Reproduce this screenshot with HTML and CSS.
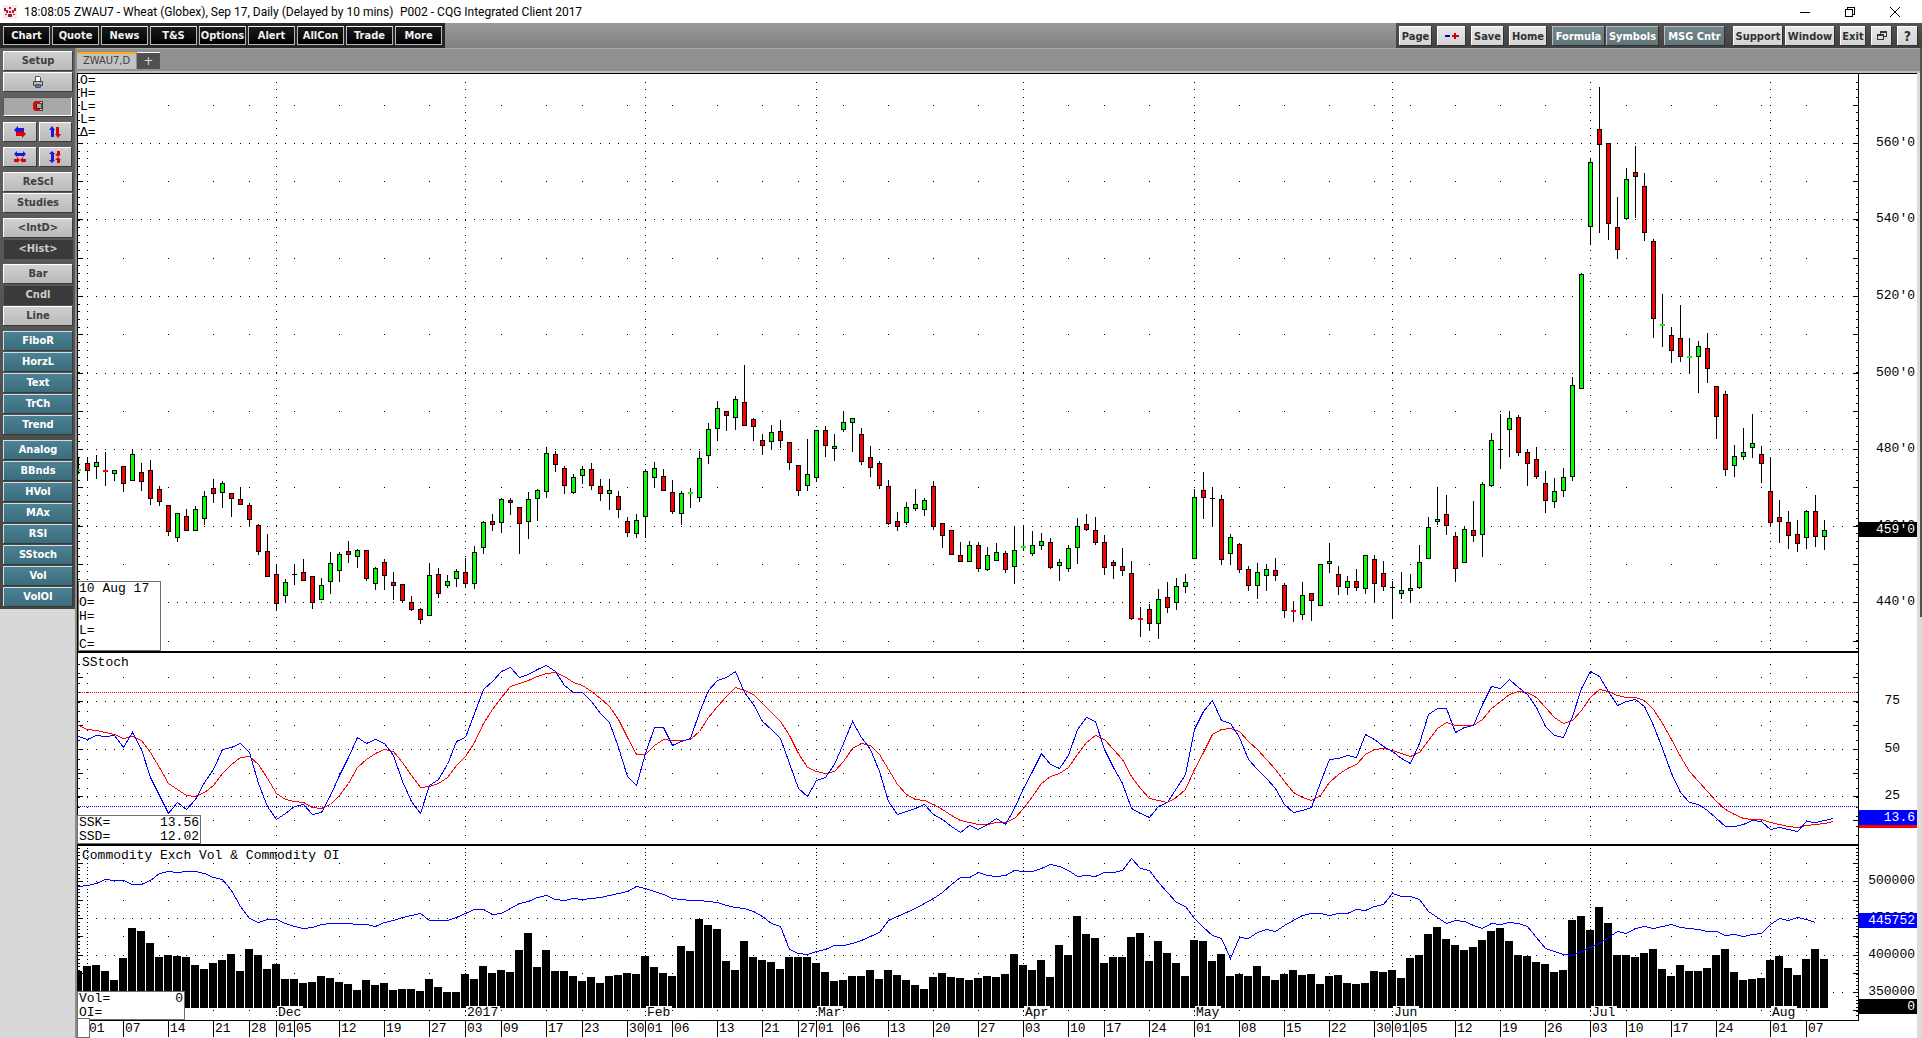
FILE: index.html
```html
<!DOCTYPE html>
<html lang="en">
<head>
<meta charset="utf-8">
<title>ZWAU7 - Wheat (Globex) - CQG Integrated Client 2017</title>
<link rel="stylesheet" href="styles.css">
</head>
<body>
<header class="titlebar">
  <svg class="logo" width="14" height="14" viewBox="0 0 14 14" aria-hidden="true">
    <rect width="14" height="14" fill="#f4eced"/>
    <path fill="#b8142c" d="M1 3h2v2h2v3H3V6H1zM13 3h-2v2H9v3h2V6h2zM6 2h2v2H6zM6 6h2v2H6zM5 9h4v3H5zM2 9h2v1H2zM10 9h2v1h-2z"/>
  </svg>
  <span class="clock">18:08:05</span>
  <span class="doc">ZWAU7 - Wheat (Globex), Sep 17, Daily (Delayed by 10 mins)</span>
  <span class="app">P002 - CQG Integrated Client 2017</span>
  <div class="window-buttons">
    <button type="button" aria-label="Minimize"><svg width="12" height="12" viewBox="0 0 12 12"><path d="M1 6.500h10"/></svg></button>
    <button type="button" aria-label="Restore"><svg width="12" height="12" viewBox="0 0 12 12"><path d="M1.500 3.500h7v7h-7zM3.500 3.500v-2h7v7h-2"/></svg></button>
    <button type="button" aria-label="Close"><svg width="12" height="12" viewBox="0 0 12 12"><path d="M1 1l10 10M11 1L1 11" shape-rendering="auto"/></svg></button>
  </div>
</header>

<nav class="toolbar">
  <div class="tools tools-main">
    <button type="button">Chart</button><button type="button">Quote</button><button type="button">News</button><button type="button">T&amp;S</button><button type="button">Options</button><button type="button">Alert</button><button type="button">AllCon</button><button type="button">Trade</button><button type="button">More</button>
  </div>
  <div class="tools tools-system">
    <button type="button">Page</button>
    <button type="button" class="add-remove" aria-label="Add or remove page"><svg width="14" height="9" viewBox="0 0 14 9"><path fill="#0000d0" d="M0 3h5v2H0z"/><path fill="#d00000" d="M7 3h2V1h2v2h3v2h-3v2H9V5H7z"/></svg></button>
    <button type="button">Save</button>
    <button type="button" class="home">Home</button>
    <div class="pair">
      <button type="button" class="slate">Formula</button>
      <button type="button" class="slate">Symbols</button>
    </div>
    <button type="button" class="slate msg">MSG Cntr</button>
    <div class="pair pair-window">
      <button type="button">Support</button>
      <button type="button">Window</button>
    </div>
    <button type="button" class="exit">Exit</button>
    <button type="button" class="square" aria-label="Restore chart"><svg width="10" height="10" viewBox="0 0 10 10" fill="none" stroke="#333" shape-rendering="crispEdges"><path d="M.5 4.500h6v4h-6zM3.500 4V1.500h6v4H7M3 .5h7M0 3.500h7"/></svg></button>
    <button type="button" class="square help">?</button>
  </div>
</nav>

<div class="workspace">
  <aside class="sidebar">
    <div class="panel">
      <div class="group">
        <button type="button">Setup</button>
        <button type="button" aria-label="Print"><svg width="12" height="12" viewBox="0 0 12 12"><path fill="#fff" stroke="#555" d="M3.500 5V.5h4l1 1V5"/><path fill="#bbb" stroke="#444" d="M1.500 5.500h9v4h-9z"/><path fill="#fff" stroke="#555" d="M3.500 8.500h5v3h-5z"/><path fill="#3878d8" d="M4 9h4v2H4z"/></svg></button>
      </div>
      <div class="group">
        <button type="button" class="pressed" aria-label="Magnet"><svg width="12" height="10" viewBox="0 0 12 10"><path fill="#d01010" d="M8 0v3H5v4h3v3H3L1 8V2l2-2z"/><path fill="#700000" d="M4 3h1v4h3v1H4z"/><path fill="#444" d="M8 0h3v10H8V7h1V3H8z"/><path fill="#ccc" d="M8 1h2v1H8zM8 8h2v1H8z"/></svg></button>
      </div>
      <div class="group halves">
        <button type="button" aria-label="Scroll horizontally"><svg width="12" height="12" viewBox="0 0 12 12"><path fill="#1818e0" d="M0 4l4-4v2h6v4H4v2z"/><path fill="#e00000" d="M12 8L8 4v2H2v4h6v2z"/></svg></button>
        <button type="button" aria-label="Scroll vertically"><svg width="12" height="12" viewBox="0 0 12 12"><path fill="#1818e0" d="M3 0L0 4h2v7h3V4h1z"/><path fill="#e00000" d="M9 12l3-4h-2V1H7v7H6z"/></svg></button>
      </div>
      <div class="group halves">
        <button type="button" aria-label="Scale horizontally"><svg width="12" height="12" viewBox="0 0 12 12"><path fill="#1818e0" d="M0 3l3-3v2h6V0l3 3-3 3V5H3v1z"/><path fill="#e00000" d="M6 9L3 6v2H0v3h3v1zM6 9l3-3v2h3v3H9v1z"/></svg></button>
        <button type="button" aria-label="Scale vertically"><svg width="12" height="12" viewBox="0 0 12 12"><path fill="#1818e0" d="M3 0L0 3h2v6H0l3 3 3-3H5V3h1z"/><path fill="#e00000" d="M9 6l3-3h-1V0H8v3H6zM9 6l3 3h-1v3H8V9H6z"/></svg></button>
      </div>
      <div class="group">
        <button type="button">ReScl</button>
        <button type="button">Studies</button>
      </div>
      <div class="group">
        <button type="button">&lt;IntD&gt;</button>
        <button type="button" class="on">&lt;Hist&gt;</button>
      </div>
      <div class="group">
        <button type="button">Bar</button>
        <button type="button" class="on">Cndl</button>
        <button type="button">Line</button>
      </div>
      <div class="group study">
        <button type="button">FiboR</button>
        <button type="button">HorzL</button>
        <button type="button">Text</button>
        <button type="button">TrCh</button>
        <button type="button">Trend</button>
      </div>
      <div class="group study">
        <button type="button">Analog</button>
        <button type="button">BBnds</button>
        <button type="button">HVol</button>
        <button type="button">MAx</button>
        <button type="button">RSI</button>
        <button type="button">SStoch</button>
        <button type="button">Vol</button>
        <button type="button">VolOI</button>
      </div>
    </div>
  </aside>

  <main class="document">
    <div class="tabs" role="tablist">
      <button type="button" class="tab" role="tab" aria-selected="true">ZWAU7,D</button>
      <button type="button" class="tab-add" aria-label="New tab">+</button>
    </div>
    <div class="chart">
      <section class="pane price">
        <svg class="plot" id="price" aria-label="Daily candles"></svg>
        <svg class="scale" id="price-scale"></svg>
        <div class="readout top">O=<br>H=<br>L=<br>L=<br>Δ=</div>
        <div class="readout boxed cursor">10 Aug 17<br>O=<br>H=<br>L=<br>C=</div>
      </section>
      <section class="pane stoch">
        <svg class="plot" id="stoch" aria-label="Slow stochastic"></svg>
        <svg class="scale" id="stoch-scale"></svg>
        <h2>SStoch</h2>
        <dl class="readout boxed values"><dt>SSK=</dt><dd>13.56</dd><dt>SSD=</dt><dd>12.02</dd></dl>
      </section>
      <section class="pane volume">
        <svg class="plot" id="volume" aria-label="Volume and open interest"></svg>
        <svg class="scale" id="volume-scale"></svg>
        <h2>Commodity Exch Vol &amp; Commodity OI</h2>
        <dl class="readout boxed totals"><dt>Vol=</dt><dd>0</dd><dt>OI=</dt><dd></dd></dl>
      </section>
      <div class="dates">
        <svg class="plot" id="dates" aria-label="Dates"></svg>
        <div class="scroll-thumb"></div>
      </div>
    </div>
  </main>
</div>
<script src="chart.js"></script>
</body>
</html>
```
FILE: styles.css
```css
* {
  box-sizing: border-box;
}

body {
  margin: 0;
  min-height: 100vh;
  display: flex;
  flex-direction: column;
  background: #fff;
  color: #000;
  font-family: "DejaVu Sans Condensed", "DejaVu Sans", sans-serif;
  font-size: 11px;
}

button {
  margin: 0;
  padding: 0;
  border: 0;
  border-radius: 0;
  font: inherit;
  color: inherit;
  display: flex;
  align-items: center;
  justify-content: center;
  white-space: nowrap;
}

/* title bar */
.titlebar {
  height: 23px;
  display: flex;
  align-items: center;
  padding-left: 3px;
  background: #fff;
  font-family: Roboto, "Noto Sans", sans-serif;
  font-size: 12px;
  white-space: nowrap;
}

.logo {
  margin-right: 7px;
}

.clock {
  min-width: 50px;
}

.doc {
  min-width: 326px;
}

.window-buttons {
  margin-left: auto;
  display: flex;
}

.window-buttons button {
  width: 45px;
  height: 21px;
  background: none;
}

.window-buttons button:last-child {
  width: 46px;
  margin-right: 4px;
}

.window-buttons svg {
  fill: none;
  stroke: #000;
  shape-rendering: crispEdges;
}

/* toolbar */
.toolbar {
  height: 25px;
  display: flex;
  justify-content: space-between;
  background: linear-gradient(#9a9a9a, #808080);
  font-weight: bold;
}

.tools {
  display: flex;
  padding: 3px;
}

.tools button {
  height: 19px;
  overflow: hidden;
}

.tools-main {
  gap: 2px;
  background: #262626;
}

.tools-main button {
  width: 47px;
  background: linear-gradient(#1a1a1a, #000);
  border: 1px solid #b8b8b8;
  border-top-color: #f0f0f0;
  color: #f0f0f0;
}

.tools-system {
  gap: 6px;
  padding-right: 5px;
  background: linear-gradient(#545454, #404040);
}

.tools-system button {
  width: 32px;
  background: linear-gradient(#e8e8e8, #d2d2d2);
  border-top: 1px solid #fff;
  border-left: 1px solid #fff;
  box-shadow: 1px 1px 0 #303030;
  color: #303030;
}

.tools-system .add-remove {
  width: 28px;
}

.tools-system .home {
  width: 37px;
}

.tools-system .exit {
  width: 25px;
}

.tools-system .pair {
  display: flex;
  gap: 2px;
}

.tools-system .pair button {
  width: 52px;
}

.tools-system .pair-window {
  gap: 3px;
  margin-left: 3px;
}

.tools-system .pair-window button {
  width: 49px;
}

.tools-system .slate {
  background: linear-gradient(#748688, #60767a);
  border-color: #b4c0c2;
  color: #fff;
}

.tools-system .msg {
  width: 60px;
}

.tools-system .square {
  width: 20px;
}

.tools-system .help {
  font-size: 14px;
}

/* workspace */
.workspace {
  flex: 1;
  display: flex;
  padding-right: 2px;
  background: linear-gradient(#505050, #505050) right top / 2px 569px no-repeat #dcdcdc;
}

.sidebar {
  flex: none;
  width: 77px;
  background: #d8d8d8;
  border-right: 2px solid #8c8c8c;
  font-weight: bold;
  color: #404040;
}

.panel {
  display: flex;
  flex-direction: column;
  gap: 6px;
  padding: 3px 4px 3px 3px;
  background: linear-gradient(#646464, #444);
}

.group {
  display: flex;
  flex-direction: column;
  gap: 2px;
}

.halves {
  flex-direction: row;
  gap: 3px;
}

.group button {
  height: 19px;
  width: 69px;
  padding-bottom: 1px;
  background: linear-gradient(#d0d0d0, #bababa);
  border-top: 1px solid #fff;
  border-left: 1px solid #fff;
  box-shadow: 1px 1px 0 #3a3a3a;
}

.halves button {
  width: 33px;
}

.group .pressed {
  background: #a8a8a8;
  border: 1px solid #fff;
  border-top-color: #555;
  border-left-color: #555;
}

.group .on {
  background: #3a3a3a;
  border-color: #555;
  color: #ccc;
}

.study button {
  background: linear-gradient(#4c8294, #3a6c7c);
  border-color: #d0e0e4;
  color: #fff;
}

/* tabs */
.document {
  flex: 1;
  min-width: 0;
  display: flex;
  flex-direction: column;
  background: #fff;
  border-right: 3px solid #dcdcdc;
}

.tabs {
  height: 25px;
  display: flex;
  align-items: flex-start;
  gap: 1px;
  padding-top: 3px;
  background: #909090;
  border-top: 1px solid #a8a8a8;
  border-bottom: 2px solid #c0c0c0;
  margin-right: -3px;
}

.tab,
.tab-add {
  height: 17px;
  padding-bottom: 2px;
}

.tab {
  width: 59px;
  background: #c0c4c4;
  border-top: 2px solid #ffa818;
  color: #404040;
}

.tab-add {
  width: 23px;
  background: #505050;
  border-top: 1px solid #fff;
  color: #ddd;
  font-size: 13px;
}

/* chart */
.chart {
  font-family: "Liberation Mono", "Courier New", monospace;
  font-size: 13px;
  line-height: 14px;
  border-top: 1px solid #000;
}

.chart svg {
  display: block;
  shape-rendering: crispEdges;
}

.pane {
  position: relative;
  display: flex;
  border-bottom: 2px solid #000;
}

.plot {
  flex: 1;
  min-width: 0;
  height: 100%;
  overflow: hidden;
  border-left: 1px solid #000;
  border-right: 1px solid #000;
}

.scale {
  flex: none;
  width: 58px;
  background: #fff;
}

.price {
  height: 579px;
}

.stoch {
  height: 193px;
}

.volume {
  height: 174px;
  border-bottom: 0;
}

/* pane rules stop at the plot's right edge */
.pane .scale {
  margin-bottom: -2px;
  height: calc(100% + 2px);
  position: relative;
}

.pane h2 {
  position: absolute;
  left: 5px;
  top: 3px;
  margin: 0;
  font-size: 13px;
  font-weight: normal;
  line-height: 14px;
  white-space: pre;
}

.readout {
  position: absolute;
  left: 1px;
  margin: 0;
  background: #fff;
}

.readout.top {
  top: 0;
  left: 3px;
  width: 50px;
  line-height: 13px;
}

.boxed {
  bottom: 0;
  border: 1px solid #707070;
}

.cursor {
  width: 83px;
  height: 70px;
}

.values,
.totals {
  display: grid;
  grid-template-columns: 1fr auto;
  padding: 0 1px;
  height: 29px;
  left: 0;
}

.values dd,
.totals dd {
  margin: 0;
}

.values {
  width: 124px;
}

.totals {
  width: 108px;
}

.dates {
  position: relative;
  height: 18px;
  margin-right: 58px;
  border-top: 1px solid #000;
}

.dates .plot {
  width: 100%;
  border: 0;
}

.scroll-thumb {
  position: absolute;
  left: 0;
  top: -3px;
  width: 13px;
  height: 20px;
  background: #fff;
  border: 1px solid #707070;
}
```
FILE: chart.js
```js
const NS = 'http://www.w3.org/2000/svg';
const STEP = 9;        // distance between two sessions
const LAST = 196;      // last session column with grid dots

// chart-space top of each pane, and left edge of the plots
const LEFT = 78;
const TOP = { price: 74, stoch: 653, volume: 846, dates: 1020 };

const months = [[1, ''], [22, 'Dec'], [43, '2017'], [63, 'Feb'], [82, 'Mar'], [105, 'Apr'],
  [124, 'May'], [146, 'Jun'], [168, 'Jul'], [188, 'Aug']];
const weeks = [[5, '07'], [10, '14'], [15, '21'], [19, '28'], [24, '05'], [29, '12'], [34, '19'],
  [39, '27'], [43, '03'], [47, '09'], [52, '17'], [56, '23'], [61, '30'], [66, '06'], [71, '13'],
  [76, '21'], [80, '27'], [85, '06'], [90, '13'], [95, '20'], [100, '27'], [105, '03'], [110, '10'],
  [114, '17'], [119, '24'], [124, '01'], [129, '08'], [134, '15'], [139, '22'], [144, '30'],
  [148, '05'], [153, '12'], [158, '19'], [163, '26'], [168, '03'], [172, '10'], [177, '17'],
  [182, '24'], [187, ''], [192, '07']];
const monthStarts = [[1, '01'], [22, '01'], [63, '01'], [82, '01'], [146, '01'], [188, '01']];

// high, body top, body bottom, low, kind: g up, r down, G/R thin body, X doji
const candles = `458 469 471 474 G|457 463 471 481 r|455 462 467 479 g|452 470 472 486 R|470 470 474 481 g|466 466 484 492 r|449 454 481 481 g|463 472 482 491 r|460 470 499 505 r|486 489 502 506 r
505 505 532 536 r|513 513 538 542 g|509 516 531 531 r|506 509 531 531 g|491 496 519 525 g|479 488 494 503 r|481 483 493 508 g|493 493 499 517 r|487 499 505 505 r|503 505 520 527 r
524 525 552 555 r|534 551 577 577 r|564 574 604 611 r|579 582 596 603 g|564 574 575 585 X|559 572 581 581 r|576 576 603 609 r|578 585 600 600 g|552 563 582 594 g|552 554 571 582 g
541 551 555 563 r|549 550 557 568 g|550 550 579 581 r|567 568 584 590 g|559 562 576 590 r|572 582 586 600 r|584 584 601 603 r|596 602 610 611 r|608 609 620 624 r|563 575 616 616 g
568 574 594 598 r|575 581 586 588 g|569 571 579 587 g|558 572 584 588 r|546 552 584 589 g|521 522 548 554 g|514 521 525 531 r|498 499 523 533 g|498 500 503 515 r|507 507 524 554 r
492 499 522 539 g|489 490 499 521 g|447 453 492 498 g|451 454 465 472 r|466 468 486 494 r|474 477 493 494 g|466 469 476 484 g|463 469 486 490 r|479 486 494 501 r|479 490 494 510 g
491 496 510 518 r|517 521 533 537 r|514 520 534 538 g|469 471 517 538 g|462 468 478 488 g|469 476 491 491 r|480 492 512 514 r|491 493 514 525 g|488 492 494 508 G|451 458 498 502 g
423 429 456 464 g|401 408 429 441 g|411 411 416 431 r|396 399 418 430 g|365 402 426 426 r|418 419 427 441 r|434 440 446 455 r|425 432 442 450 g|420 431 441 448 r|442 442 463 470 r
465 465 491 496 r|439 474 486 491 g|430 430 478 482 g|426 430 446 457 r|434 446 449 461 g|411 422 430 432 g|418 418 423 452 g|428 434 462 465 r|446 457 468 477 r|461 463 486 489 r
480 486 524 525 r|512 521 527 531 r|502 507 523 525 g|489 504 509 511 g|498 500 510 516 g|481 486 527 530 r|523 523 536 548 r|530 530 555 555 r|542 555 562 562 r|541 545 562 562 g
542 545 569 572 r|547 555 570 571 g|543 552 561 561 g|551 553 570 573 r|526 550 567 584 g|525 546 548 551 G|531 545 554 556 g|533 541 546 550 g|538 542 568 569 r|559 562 566 581 g
545 548 569 572 g|518 526 548 564 g|514 524 530 531 r|517 530 543 545 r|535 542 568 575 r|560 562 566 579 r|548 566 571 576 r|561 573 619 620 r|607 618 620 637 R|604 609 624 631 r
589 599 624 639 g|582 597 608 613 r|578 586 603 610 g|574 582 587 593 g|489 497 559 559 g|472 490 498 519 r|487 498 499 527 X|495 499 560 565 r|534 537 554 565 g|543 544 570 573 r
566 569 586 591 r|563 572 586 599 g|564 569 576 591 g|558 570 576 581 r|583 585 611 618 r|601 610 612 622 R|582 595 615 620 g|593 593 601 621 r|564 564 606 606 g|543 561 564 573 g
566 574 587 595 r|576 581 588 595 g|569 581 588 591 r|555 555 589 594 g|555 559 584 603 r|561 573 587 591 r|581 587 588 619 X|572 590 594 599 g|574 588 591 603 g|545 562 588 589 g
517 527 559 559 g|487 519 522 525 g|495 514 526 535 r|532 536 569 582 r|526 529 563 563 g|501 530 536 542 r|482 484 535 557 g|433 440 486 487 g|414 449 450 469 X|411 418 430 457 g
415 417 453 456 r|449 452 464 486 r|447 459 477 479 r|471 483 501 513 r|478 491 502 508 g|468 477 491 497 g|377 385 477 481 g|273 274 389 389 g|158 162 227 245 g|87 129 145 233 r
143 143 224 240 r|197 227 250 259 r|168 179 219 220 g|146 172 177 218 r|173 186 233 241 r|239 241 319 338 r|294 324 326 347 G|327 335 351 363 r|305 338 357 362 r|338 356 358 374 G
341 346 357 393 g|333 348 369 383 r|386 386 417 439 r|391 394 470 476 r|445 456 466 477 g|428 452 457 460 g|414 443 448 458 g|446 454 464 483 r|457 491 523 525 r|500 517 522 543 r
511 522 536 549 r|520 534 544 552 r|510 511 538 549 g|495 511 537 547 r|520 530 537 550 g`
  .split(/[|\n]/).map(row => {
    const [high, top, bottom, low, kind] = row.trim().split(' ');
    return { high: +high, top: +top, bottom: +bottom, low: +low, kind };
  });

const volume = [
  37, 42, 43, 37, 28, 50, 80, 77, 65, 51, 53, 52, 51, 43, 39, 45, 48, 54, 37, 59,
  53, 39, 44, 29, 29, 25, 26, 32, 30, 26, 24, 18, 28, 23, 25, 18, 19, 19, 17, 29,
  21, 16, 16, 34, 29, 42, 35, 38, 36, 58, 75, 41, 58, 37, 37, 32, 27, 31, 25, 32,
  33, 35, 34, 52, 41, 35, 32, 62, 57, 89, 83, 79, 47, 38, 67, 51, 48, 46, 39, 51,
  51, 51, 45, 36, 27, 28, 32, 32, 38, 29, 38, 33, 28, 23, 19, 31, 35, 31, 30, 28,
  30, 32, 31, 34, 54, 43, 38, 48, 31, 63, 53, 92, 74, 70, 45, 51, 51, 71, 75, 47,
  67, 55, 45, 32, 68, 67, 47, 54, 32, 34, 32, 42, 32, 28, 34, 38, 33, 34, 24, 32,
  33, 25, 24, 25, 37, 36, 38, 30, 50, 53, 74, 81, 69, 63, 58, 61, 68, 77, 80, 67,
  53, 52, 46, 44, 36, 38, 88, 92, 78, 101, 85, 53, 53, 51, 55, 59, 39, 32, 43, 37,
  37, 40, 53, 59, 36, 28, 29, 30, 48, 52, 40, 33, 49, 59, 49];

const openInterest = [
  886, 885, 883, 879, 880, 880, 884, 884, 880, 873, 871, 872, 871, 871, 873, 877, 879, 890, 906, 918,
  922, 919, 919, 923, 926, 928, 927, 924, 923, 923, 923, 924, 924, 926, 922, 920, 917, 915, 913, 920,
  920, 920, 917, 913, 909, 909, 914, 913, 908, 903, 901, 897, 895, 899, 900, 898, 899, 898, 897, 895,
  893, 891, 886, 888, 891, 894, 898, 899, 900, 900, 901, 902, 905, 907, 908, 911, 916, 923, 926, 949,
  953, 954, 951, 949, 945, 945, 943, 940, 936, 932, 920, 916, 912, 908, 903, 898, 892, 884, 877, 877,
  872, 875, 876, 875, 870, 871, 871, 868, 864, 866, 870, 876, 875, 876, 872, 872, 870, 858, 868, 870,
  882, 892, 902, 906, 918, 927, 935, 938, 958, 937, 938, 932, 929, 931, 925, 920, 915, 913, 913, 915,
  913, 913, 909, 910, 906, 904, 893, 896, 896, 899, 911, 917, 923, 920, 921, 925, 928, 923, 924, 922,
  923, 926, 937, 948, 951, 954, 955, 951, 947, 943, 937, 931, 933, 928, 926, 928, 926, 924, 927, 928,
  929, 931, 931, 935, 934, 936, 934, 933, 924, 918, 920, 917, 919, 922];

const ssk = [
  736, 739, 735, 736, 735, 747, 732, 749, 777, 795, 813, 802, 809, 799, 782, 769, 749, 747, 743, 752,
  783, 806, 819, 813, 806, 804, 814, 812, 795, 775, 757, 737, 743, 739, 743, 755, 781, 801, 813, 785,
  779, 764, 741, 737, 713, 689, 681, 671, 667, 677, 674, 669, 665, 671, 685, 692, 692, 701, 713, 722,
  747, 776, 785, 753, 727, 727, 745, 741, 738, 712, 690, 680, 677, 671, 692, 704, 721, 729, 738, 763,
  788, 796, 780, 777, 764, 743, 721, 737, 749, 771, 801, 814, 811, 808, 804, 814, 819, 826, 832, 825,
  829, 824, 818, 824, 808, 788, 771, 753, 764, 768, 755, 729, 717, 721, 749, 767, 783, 808, 813, 817,
  806, 802, 788, 774, 729, 711, 700, 720, 723, 737, 759, 769, 778, 788, 804, 812, 810, 807, 782, 759,
  758, 755, 757, 734, 739, 746, 751, 758, 763, 743, 714, 708, 708, 732, 727, 725, 704, 686, 688, 679,
  687, 694, 707, 726, 735, 737, 716, 688, 671, 676, 691, 705, 701, 699, 706, 725, 748, 773, 792, 802,
  804, 810, 818, 826, 826, 824, 820, 821, 829, 827, 829, 831, 821, 822, 820, 818];

const ssd = [
  725, 729, 730, 732, 734, 738, 736, 740, 752, 767, 783, 789, 795, 796, 792, 785, 773, 764, 757, 756,
  764, 778, 793, 799, 801, 802, 807, 808, 804, 795, 783, 767, 759, 753, 749, 751, 762, 775, 787, 786,
  783, 777, 765, 756, 742, 723, 709, 697, 686, 683, 680, 676, 673, 672, 676, 682, 685, 691, 698, 706,
  719, 737, 754, 754, 745, 739, 740, 740, 739, 731, 717, 706, 696, 687, 690, 694, 703, 712, 721, 735,
  753, 767, 771, 773, 771, 761, 748, 743, 745, 754, 769, 784, 794, 799, 800, 804, 809, 815, 820, 822,
  824, 824, 822, 822, 818, 808, 796, 783, 776, 773, 767, 754, 742, 735, 739, 749, 759, 776, 788, 798,
  800, 802, 797, 789, 769, 752, 734, 729, 728, 731, 741, 749, 759, 769, 781, 792, 797, 800, 795, 782,
  774, 768, 764, 754, 749, 748, 750, 753, 756, 752, 740, 728, 722, 725, 725, 725, 719, 708, 701, 694,
  691, 692, 697, 707, 717, 723, 720, 710, 697, 689, 691, 695, 697, 697, 700, 709, 723, 739, 756, 771,
  781, 791, 801, 809, 814, 818, 819, 819, 822, 824, 826, 827, 825, 824, 823, 821];

const x = i => LEFT + STEP * i;

function add(parent, name, attrs, text) {
  const node = document.createElementNS(NS, name);
  for (const key in attrs) node.setAttribute(key, attrs[key]);
  if (text !== undefined) node.textContent = text;
  parent.appendChild(node);
  return node;
}

function layer(id, pane, left) {
  const svg = document.getElementById(id);
  return add(svg, 'g', { transform: `translate(${-left} ${-TOP[pane]})` });
}

const box = (px, py, w, h) => `M${px} ${py}h${w}v${h}h${-w}z`;

// rows of dots per session, rows of dots per week, and dotted month lines
function grid(g, width, rows, weekRows, monthDots) {
  let d = '';
  for (const y of rows) for (let i = 1; i <= LAST; i++) d += box(x(i), y, 1, 1);
  for (const y of weekRows) for (const [i] of weeks) d += box(x(i), y, 1, 1);
  for (const y of monthDots) for (const [i] of months) d += box(x(i), y, 1, 1);
  for (const y of monthDots) d += box(LEFT, y, 2, 1) + box(LEFT + width - 2, y, 2, 1);
  for (const y of [...rows, ...weekRows]) d += box(LEFT, y, 5, 1) + box(LEFT + width - 5, y, 5, 1);
  add(g, 'path', { d });
}

function line(g, values, color) {
  const points = values.map((y, i) => `${x(i) + 0.5},${y + 0.5}`).join(' ');
  add(g, 'polyline', { points, fill: 'none', stroke: color });
}

function range(from, to, step) {
  const out = [];
  for (let y = from; y < to; y += step) out.push(Math.round(y));
  return out;
}

function draw() {
  document.querySelectorAll('.chart svg').forEach(svg => svg.replaceChildren());
  const width = document.getElementById('price').getBoundingClientRect().width - 2;

  const price = layer('price', 'price', LEFT);
  grid(price, width, [143, 219, 296, 373, 449, 526, 602], [105, 181, 258, 334, 411, 487, 564, 641],
    range(81.800, 650, 7.650));
  let wicks = '', outlines = '', up = '', down = '';
  candles.forEach((c, i) => {
    wicks += box(x(i), c.high, 1, c.low - c.high);
    const h = c.bottom - c.top;
    if (c.kind === 'X') outlines += box(x(i) - 2, c.top, 5, 1);
    else if (c.kind === 'G') up += box(x(i) - 2, c.top, 5, 2);
    else if (c.kind === 'R') down += box(x(i) - 2, c.top, 5, 2);
    else {
      outlines += box(x(i) - 2, c.top, 5, h);
      const body = box(x(i) - 1, c.top + 1, 3, h - 2);
      if (c.kind === 'g') up += body; else down += body;
    }
  });
  add(price, 'path', { d: wicks + outlines });
  add(price, 'path', { d: up, fill: '#00ff00' });
  add(price, 'path', { d: down, fill: '#ff0000' });

  const stoch = layer('stoch', 'stoch', LEFT);
  grid(stoch, width, [701, 749, 796], [677, 725, 773, 820], range(663.500, 840, 9.550));
  for (const [y, color] of [[692, '#ff0000'], [806, '#0000ff']]) {
    add(stoch, 'path', { d: `M${LEFT} ${y + 0.5}h${width}`, stroke: color, 'stroke-dasharray': '1 1' });
  }
  line(stoch, ssd, '#ff0000');
  line(stoch, ssk, '#0000ff');

  const vol = layer('volume', 'volume', LEFT);
  grid(vol, width, [881, 918, 955, 992], [863, 900, 936, 973, 1010], range(848, 1018, 3.700));
  add(vol, 'path', { d: volume.map((h, i) => box(x(i) - 4, 1008 - h, 8, h)).join('') });
  line(vol, openInterest, '#0000ff');
  for (const [i, name] of months) {
    if (!name) continue;
    add(vol, 'rect', { x: x(i) + 1, y: 1006, width: name.length * 8 + 2, height: 13, fill: '#fff' });
    add(vol, 'text', { x: x(i) + 2, y: 1016 }, name);
  }

  const dates = layer('dates', 'dates', LEFT - 1);
  for (const [i, day] of [...weeks, ...monthStarts]) {
    if (!day) continue;
    add(dates, 'path', { d: box(x(i), 1020, 1, 16) });
    add(dates, 'text', { x: x(i) + 2, y: 1031 }, day);
  }

  const AXIS = 1859;
  const label = (g, text, y, right = 56, fill = '#000') =>
    add(g, 'text', { x: AXIS + right, y: y + 4, 'text-anchor': 'end', fill }, text);
  const tag = (g, text, y, fill) => {
    add(g, 'rect', { x: AXIS, y, width: 58, height: 15, fill });
    label(g, text, y + 7, 56, '#fff');
  };

  const priceScale = layer('price-scale', 'price', AXIS);
  [[560, 143], [540, 219], [520, 296], [500, 373], [480, 449], [460, 526], [440, 602]]
    .forEach(([p, y]) => label(priceScale, `${p}'0`, y - 1));
  tag(priceScale, "459'0", 522, '#000');

  const stochScale = layer('stoch-scale', 'stoch', AXIS);
  [[75, 701], [50, 749], [25, 796]].forEach(([p, y]) => label(stochScale, p, y - 1, 41));
  add(stochScale, 'rect', { x: AXIS, y: 814, width: 58, height: 14, fill: '#ff0000' });
  tag(stochScale, '13.6', 810, '#0000ff');

  const volScale = layer('volume-scale', 'volume', AXIS);
  [[500000, 881], [450000, 918], [400000, 955], [350000, 992]]
    .forEach(([p, y]) => label(volScale, p, y - 1));
  tag(volScale, '445752', 913, '#0000ff');
  tag(volScale, '0', 999, '#000');
}

draw();
window.addEventListener('resize', draw);
```
